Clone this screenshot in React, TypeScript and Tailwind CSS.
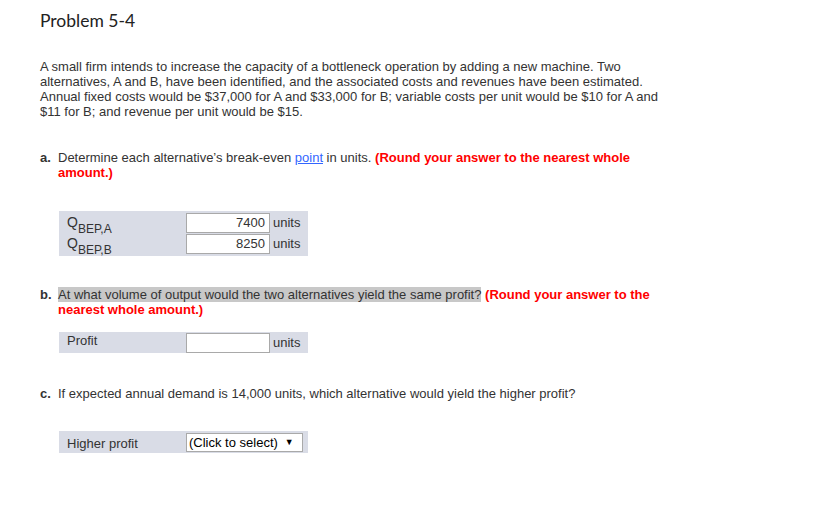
import React from 'react';

const font = { fontFamily: '"Liberation Sans", Arial, sans-serif' };

function Sub({ main, sub }: { main: string; sub: string }) {
  return (
    <span className="text-[14px] leading-[15px]">
      {main}
      <sub className="text-[12px] align-[-3px] leading-none">{sub}</sub>
    </span>
  );
}

export default function App() {
  return (
    <div className="w-[822px] h-[513px] bg-white text-[#333] pl-[40px] pt-[10px]" style={font}>
      <h1 className="text-[17.5px] leading-[22px] text-[#222] font-['Lato','Open_Sans',sans-serif]">
        Problem 5-4
      </h1>

      <p className="mt-[27px] text-[13px] leading-[15px] w-[625px]">
        A small firm intends to increase the capacity of a bottleneck operation by adding a new machine. Two
        alternatives, A and B, have been identified, and the associated costs and revenues have been estimated.
        Annual fixed costs would be $37,000 for A and $33,000 for B; variable costs per unit would be $10 for A and
        $11 for B; and revenue per unit would be $15.
      </p>

      {/* Part a */}
      <div className="mt-[31px] flex text-[13px] leading-[15px]">
        <span className="w-[18px] font-bold">a.</span>
        <p className="w-[590px]">
          Determine each alternative’s break-even{' '}
          <span className="text-[#3366ff] underline">point</span> in units.{' '}
          <span className="text-[#ff0000] font-bold">(Round your answer to the nearest whole amount.)</span>
        </p>
      </div>

      <div className="mt-[31px] ml-[19px] w-[249px] bg-[#d9dce6] text-[13px] py-[2px]">
        <div className="flex items-center h-[20px]">
          <span className="w-[127px] pl-[8px] self-start">
            <Sub main="Q" sub="BEP,A" />
          </span>
          <div className="w-[84px] h-[20px] border border-[#a9a9a9] bg-white text-right pr-[4px] leading-[18px]">
            7400
          </div>
          <span className="pl-[3px]">units</span>
        </div>
        <div className="flex items-center h-[20px] mt-px">
          <span className="w-[127px] pl-[8px] self-start">
            <Sub main="Q" sub="BEP,B" />
          </span>
          <div className="w-[84px] h-[20px] border border-[#a9a9a9] bg-white text-right pr-[4px] leading-[18px]">
            8250
          </div>
          <span className="pl-[3px]">units</span>
        </div>
      </div>

      {/* Part b */}
      <div className="mt-[31px] flex text-[13px] leading-[15px]">
        <span className="w-[18px] font-bold">b.</span>
        <p className="w-[600px]">
          <span className="bg-[#c8c8c8]">At what volume of output would the two alternatives yield the same profit?</span>{' '}
          <span className="text-[#ff0000] font-bold">(Round your answer to the nearest whole amount.)</span>
        </p>
      </div>

      <div className="mt-[15px] ml-[19px] w-[249px] h-[21px] bg-[#d9dce6] text-[13px] flex items-start">
        <span className="w-[127px] pl-[8px] leading-[15px] pt-[1px]">Profit</span>
        <div className="w-[84px] h-[20px] mt-[1px] border border-[#a9a9a9] bg-white" />
        <span className="pl-[3px] pt-[3px] leading-[15px]">units</span>
      </div>

      {/* Part c */}
      <div className="mt-[33px] flex text-[13px] leading-[15px]">
        <span className="w-[18px] font-bold">c.</span>
        <p>If expected annual demand is 14,000 units, which alternative would yield the higher profit?</p>
      </div>

      <div className="mt-[30px] ml-[19px] w-[249px] h-[22px] bg-[#d9dce6] text-[13px] flex items-center">
        <span className="w-[127px] pl-[8px] leading-[15px] pt-[2px]">Higher profit</span>
        <div className="h-[19px] border border-[#a9a9a9] bg-white flex items-center pl-[2px] pr-[8px] text-black leading-[15px]">
          (Click to select)
          <span className="ml-[7px] text-[9px]">▼</span>
        </div>
      </div>
    </div>
  );
}
